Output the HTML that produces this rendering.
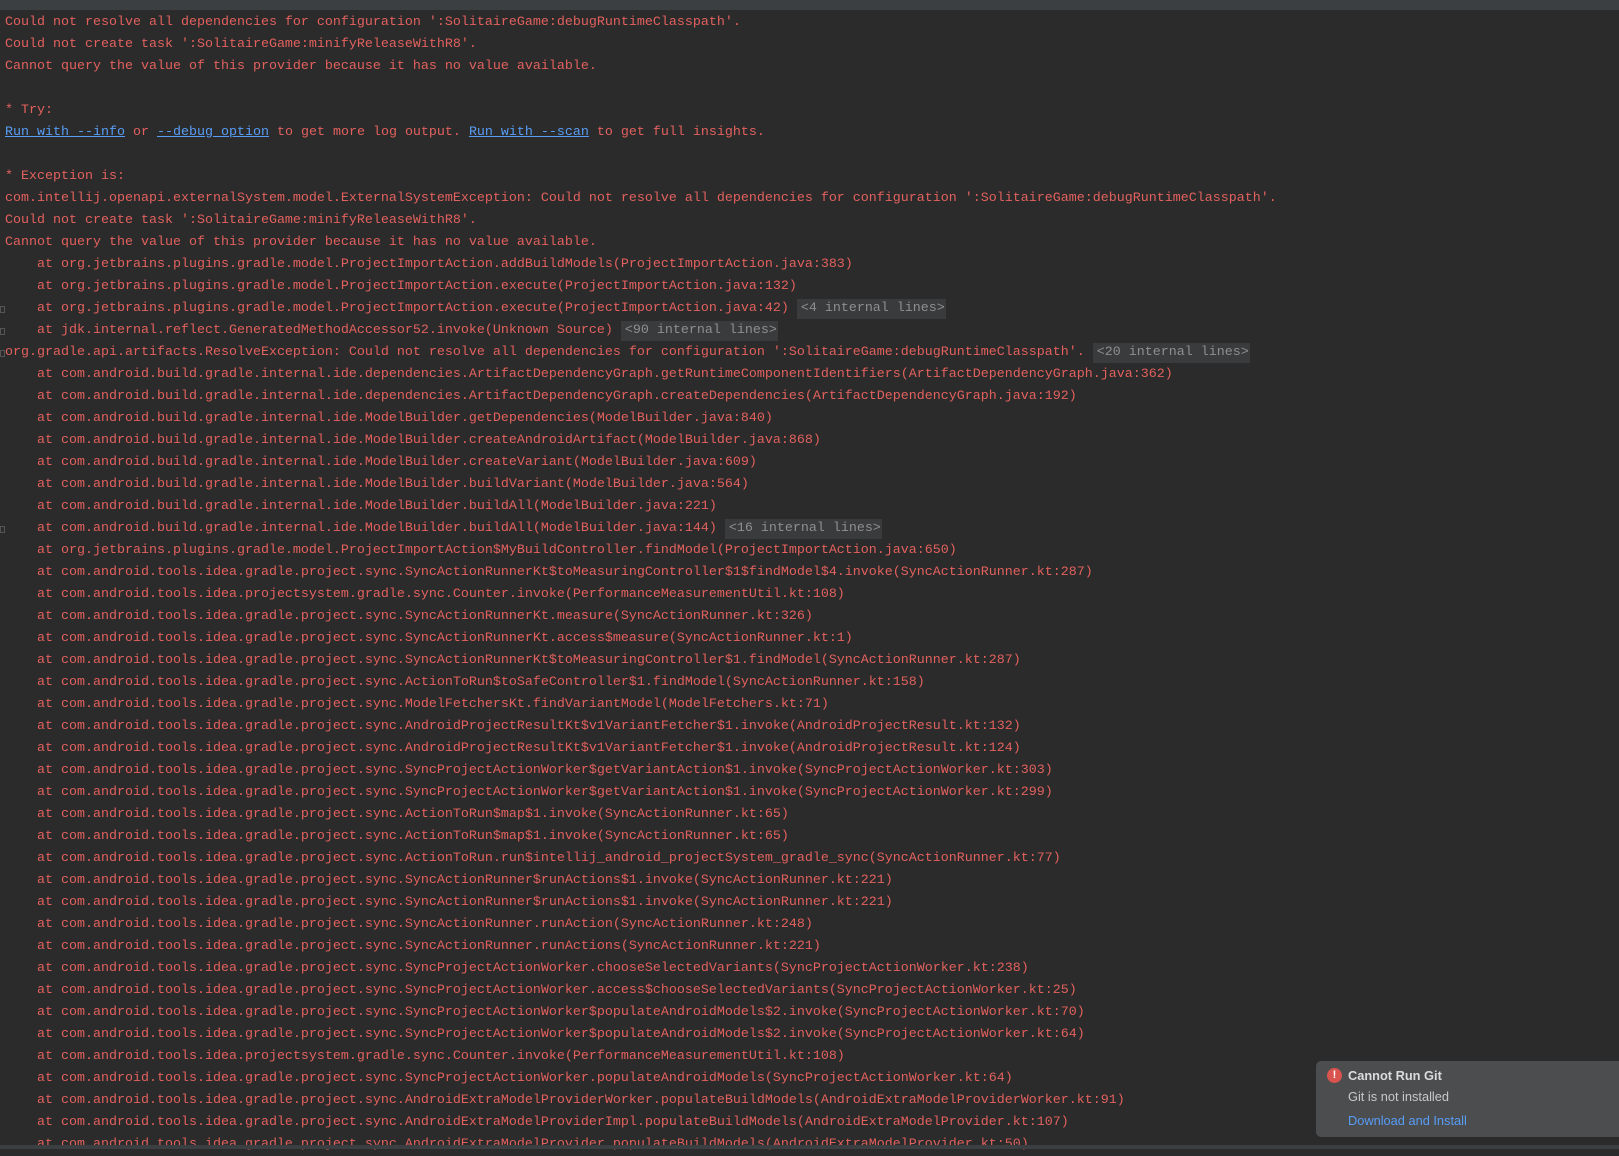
<!DOCTYPE html>
<html><head><meta charset="utf-8"><style>
html,body{margin:0;padding:0;width:1619px;height:1149px;overflow:hidden;background:#2b2b2b;}
.top{position:absolute;left:0;top:0;width:1619px;height:10px;background:#3c3f41;}
.bot{position:absolute;left:0;top:1145px;width:1619px;height:4px;background:#3c3f41;}
pre{position:absolute;left:5px;top:12px;margin:0;font-family:"Liberation Mono",monospace;font-size:13.33px;line-height:22px;color:#e2615e;white-space:pre;}
a{color:#589df6;text-decoration:underline;}
.b{background:#3a3b3c;color:#8d8f91;padding:2px 1px 3px 4px;}
.f{position:absolute;left:0;width:5px;height:7px;border:1px solid #555;box-sizing:border-box;}
.toast{position:absolute;left:1316px;top:1061px;width:320px;height:76px;background:#4b4d4f;border-radius:5px;font-family:"Liberation Sans",sans-serif;font-size:12.8px;}
.ic{position:absolute;left:11px;top:7px;width:15px;height:15px;border-radius:50%;background:#d9534f;color:#fff;font-weight:bold;font-size:11px;text-align:center;line-height:15px;}
</style></head><body>
<div class="top"></div>
<pre>Could not resolve all dependencies for configuration ':SolitaireGame:debugRuntimeClasspath'.
Could not create task ':SolitaireGame:minifyReleaseWithR8'.
Cannot query the value of this provider because it has no value available.

* Try:
<a>Run with --info</a> or <a>--debug option</a> to get more log output. <a>Run with --scan</a> to get full insights.

* Exception is:
com.intellij.openapi.externalSystem.model.ExternalSystemException: Could not resolve all dependencies for configuration ':SolitaireGame:debugRuntimeClasspath'.
Could not create task ':SolitaireGame:minifyReleaseWithR8'.
Cannot query the value of this provider because it has no value available.
    at org.jetbrains.plugins.gradle.model.ProjectImportAction.addBuildModels(ProjectImportAction.java:383)
    at org.jetbrains.plugins.gradle.model.ProjectImportAction.execute(ProjectImportAction.java:132)
    at org.jetbrains.plugins.gradle.model.ProjectImportAction.execute(ProjectImportAction.java:42) <span class="b">&lt;4 internal lines&gt;</span>
    at jdk.internal.reflect.GeneratedMethodAccessor52.invoke(Unknown Source) <span class="b">&lt;90 internal lines&gt;</span>
org.gradle.api.artifacts.ResolveException: Could not resolve all dependencies for configuration ':SolitaireGame:debugRuntimeClasspath'. <span class="b">&lt;20 internal lines&gt;</span>
    at com.android.build.gradle.internal.ide.dependencies.ArtifactDependencyGraph.getRuntimeComponentIdentifiers(ArtifactDependencyGraph.java:362)
    at com.android.build.gradle.internal.ide.dependencies.ArtifactDependencyGraph.createDependencies(ArtifactDependencyGraph.java:192)
    at com.android.build.gradle.internal.ide.ModelBuilder.getDependencies(ModelBuilder.java:840)
    at com.android.build.gradle.internal.ide.ModelBuilder.createAndroidArtifact(ModelBuilder.java:868)
    at com.android.build.gradle.internal.ide.ModelBuilder.createVariant(ModelBuilder.java:609)
    at com.android.build.gradle.internal.ide.ModelBuilder.buildVariant(ModelBuilder.java:564)
    at com.android.build.gradle.internal.ide.ModelBuilder.buildAll(ModelBuilder.java:221)
    at com.android.build.gradle.internal.ide.ModelBuilder.buildAll(ModelBuilder.java:144) <span class="b">&lt;16 internal lines&gt;</span>
    at org.jetbrains.plugins.gradle.model.ProjectImportAction$MyBuildController.findModel(ProjectImportAction.java:650)
    at com.android.tools.idea.gradle.project.sync.SyncActionRunnerKt$toMeasuringController$1$findModel$4.invoke(SyncActionRunner.kt:287)
    at com.android.tools.idea.projectsystem.gradle.sync.Counter.invoke(PerformanceMeasurementUtil.kt:108)
    at com.android.tools.idea.gradle.project.sync.SyncActionRunnerKt.measure(SyncActionRunner.kt:326)
    at com.android.tools.idea.gradle.project.sync.SyncActionRunnerKt.access$measure(SyncActionRunner.kt:1)
    at com.android.tools.idea.gradle.project.sync.SyncActionRunnerKt$toMeasuringController$1.findModel(SyncActionRunner.kt:287)
    at com.android.tools.idea.gradle.project.sync.ActionToRun$toSafeController$1.findModel(SyncActionRunner.kt:158)
    at com.android.tools.idea.gradle.project.sync.ModelFetchersKt.findVariantModel(ModelFetchers.kt:71)
    at com.android.tools.idea.gradle.project.sync.AndroidProjectResultKt$v1VariantFetcher$1.invoke(AndroidProjectResult.kt:132)
    at com.android.tools.idea.gradle.project.sync.AndroidProjectResultKt$v1VariantFetcher$1.invoke(AndroidProjectResult.kt:124)
    at com.android.tools.idea.gradle.project.sync.SyncProjectActionWorker$getVariantAction$1.invoke(SyncProjectActionWorker.kt:303)
    at com.android.tools.idea.gradle.project.sync.SyncProjectActionWorker$getVariantAction$1.invoke(SyncProjectActionWorker.kt:299)
    at com.android.tools.idea.gradle.project.sync.ActionToRun$map$1.invoke(SyncActionRunner.kt:65)
    at com.android.tools.idea.gradle.project.sync.ActionToRun$map$1.invoke(SyncActionRunner.kt:65)
    at com.android.tools.idea.gradle.project.sync.ActionToRun.run$intellij_android_projectSystem_gradle_sync(SyncActionRunner.kt:77)
    at com.android.tools.idea.gradle.project.sync.SyncActionRunner$runActions$1.invoke(SyncActionRunner.kt:221)
    at com.android.tools.idea.gradle.project.sync.SyncActionRunner$runActions$1.invoke(SyncActionRunner.kt:221)
    at com.android.tools.idea.gradle.project.sync.SyncActionRunner.runAction(SyncActionRunner.kt:248)
    at com.android.tools.idea.gradle.project.sync.SyncActionRunner.runActions(SyncActionRunner.kt:221)
    at com.android.tools.idea.gradle.project.sync.SyncProjectActionWorker.chooseSelectedVariants(SyncProjectActionWorker.kt:238)
    at com.android.tools.idea.gradle.project.sync.SyncProjectActionWorker.access$chooseSelectedVariants(SyncProjectActionWorker.kt:25)
    at com.android.tools.idea.gradle.project.sync.SyncProjectActionWorker$populateAndroidModels$2.invoke(SyncProjectActionWorker.kt:70)
    at com.android.tools.idea.gradle.project.sync.SyncProjectActionWorker$populateAndroidModels$2.invoke(SyncProjectActionWorker.kt:64)
    at com.android.tools.idea.projectsystem.gradle.sync.Counter.invoke(PerformanceMeasurementUtil.kt:108)
    at com.android.tools.idea.gradle.project.sync.SyncProjectActionWorker.populateAndroidModels(SyncProjectActionWorker.kt:64)
    at com.android.tools.idea.gradle.project.sync.AndroidExtraModelProviderWorker.populateBuildModels(AndroidExtraModelProviderWorker.kt:91)
    at com.android.tools.idea.gradle.project.sync.AndroidExtraModelProviderImpl.populateBuildModels(AndroidExtraModelProvider.kt:107)
    at com.android.tools.idea.gradle.project.sync.AndroidExtraModelProvider.populateBuildModels(AndroidExtraModelProvider.kt:50)</pre>
<div class="f" style="top:306px"></div>
<div class="f" style="top:328px"></div>
<div class="f" style="top:350px"></div>
<div class="f" style="top:526px"></div>
<div class="bot"></div>
<div class="toast">
<div class="ic">!</div>
<div style="position:absolute;left:32px;top:7px;color:#dcdcdc;font-weight:bold;">Cannot Run Git</div>
<div style="position:absolute;left:32px;top:28px;color:#c8c8c8;">Git is not installed</div>
<div style="position:absolute;left:32px;top:52px;color:#589df6;">Download and Install</div>
</div>
</body></html>
